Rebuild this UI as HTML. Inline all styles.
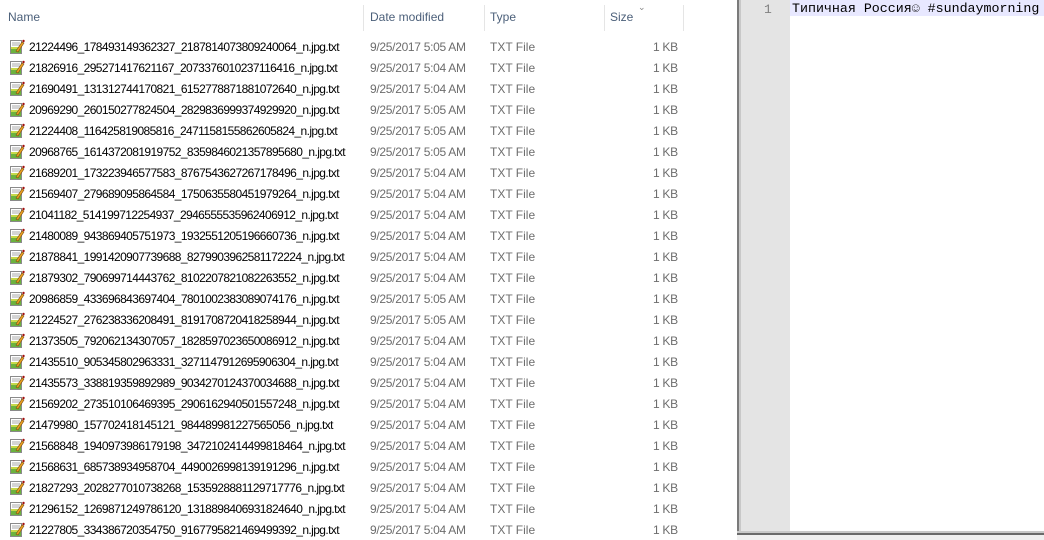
<!DOCTYPE html>
<html><head><meta charset="utf-8"><style>
*{margin:0;padding:0;box-sizing:border-box}
body{width:1044px;height:540px;overflow:hidden;background:#fff;font-family:"Segoe UI","Liberation Sans",sans-serif;font-size:12px;color:#000;position:relative}
.h{position:absolute;top:10px;color:#4c607a;font-size:12px}
.sep{position:absolute;top:5px;width:1px;height:26px;background:#e5e5e5}
.r{position:absolute;left:0;width:700px;height:21px}
.r span{position:absolute;top:4px;white-space:nowrap}
.n{left:29px;letter-spacing:-0.6px}
.d{left:370px;color:#6d6d6d;letter-spacing:-0.3px}
.t{left:490px;color:#6d6d6d}
.s{color:#6d6d6d;letter-spacing:-0.3px}
.ic{position:absolute;left:9px;top:3px;width:16px;height:16px}
</style></head><body>
<div class="h" style="left:8px">Name</div>
<div class="sep" style="left:363px"></div>
<div class="h" style="left:370px">Date modified</div>
<div class="sep" style="left:484px"></div>
<div class="h" style="left:490px">Type</div>
<div class="sep" style="left:604px"></div>
<div class="h" style="left:610px">Size</div>
<div style="position:absolute;left:638px;top:2px;color:#888;font-size:9px">&#8964;</div>
<div class="sep" style="left:683px"></div>
<div id="rows"></div>
<div style="position:absolute;left:737px;top:0;width:2px;height:534px;background:#7a7a7a"></div>
<div style="position:absolute;left:739px;top:0;width:2px;height:532px;background:#c8c8c8"></div>
<div style="position:absolute;left:741px;top:0;width:49px;height:531px;background:#e4e4e4"></div>
<div style="position:absolute;left:764px;top:2px;color:#808080;font-family:'Liberation Mono',monospace;font-size:13px">1</div>
<div style="position:absolute;left:790px;top:0;width:254px;height:16px;background:#e8e8ff"></div>
<div style="position:absolute;left:792px;top:1px;font-family:'Liberation Mono',monospace;font-size:13.3px;white-space:nowrap">Типичная Россия☺ #sundaymorning</div>
<div style="position:absolute;left:737px;top:531px;width:307px;height:2px;background:#c8c8c8"></div>
<div style="position:absolute;left:737px;top:533px;width:307px;height:2px;background:#6a6a6a"></div>
<div style="position:absolute;left:737px;top:535px;width:307px;height:5px;background:#f0f0f0"></div>
<script>
var d=[["21224496_178493149362327_2187814073809240064","5:05"],["21826916_295271417621167_2073376010237116416","5:04"],["21690491_131312744170821_6152778871881072640","5:04"],["20969290_260150277824504_2829836999374929920","5:05"],["21224408_116425819085816_2471158155862605824","5:05"],["20968765_1614372081919752_8359846021357895680","5:05"],["21689201_173223946577583_8767543627267178496","5:04"],["21569407_279689095864584_1750635580451979264","5:04"],["21041182_514199712254937_2946555535962406912","5:04"],["21480089_943869405751973_1932551205196660736","5:04"],["21878841_1991420907739688_8279903962581172224","5:04"],["21879302_790699714443762_8102207821082263552","5:04"],["20986859_433696843697404_7801002383089074176","5:05"],["21224527_276238336208491_8191708720418258944","5:05"],["21373505_792062134307057_1828597023650086912","5:04"],["21435510_905345802963331_3271147912695906304","5:04"],["21435573_338819359892989_9034270124370034688","5:04"],["21569202_273510106469395_2906162940501557248","5:04"],["21479980_157702418145121_984489981227565056","5:04"],["21568848_1940973986179198_3472102414499818464","5:04"],["21568631_685738934958704_4490026998139191296","5:04"],["21827293_2028277010738268_1535928881129717776","5:04"],["21296152_1269871249786120_1318898406931824640","5:04"],["21227805_334386720354750_9167795821469499392","5:04"]];
var ic='<svg class="ic" viewBox="0 0 16 16"><rect x="1.5" y="1.5" width="11" height="13" fill="#fff" stroke="#8a8a8a"/><line x1="3" y1="4" x2="11" y2="4" stroke="#aaa"/><line x1="3" y1="6" x2="11" y2="6" stroke="#aaa"/><rect x="2" y="8" width="10" height="6" fill="#6cb33f"/><rect x="2" y="8" width="10" height="2" fill="#c7d94a"/><path d="M7 12 L13 3 L15 4 L9 13 Z" fill="#e8a020" stroke="#7a4a10" stroke-width=".6"/><circle cx="14.5" cy="2" r="1.2" fill="#a01010"/></svg>';
var h="";
for(var i=0;i<d.length;i++){var y=36+i*21;h+='<div class="r" style="top:'+y+'px">'+ic+'<span class="n">'+d[i][0]+'_n.jpg.txt</span><span class="d">9/25/2017 '+d[i][1]+' AM</span><span class="t">TXT File</span><span class="s" style="left:653px">1 KB</span></div>';}
document.getElementById("rows").innerHTML=h;
</script>
</body></html>
